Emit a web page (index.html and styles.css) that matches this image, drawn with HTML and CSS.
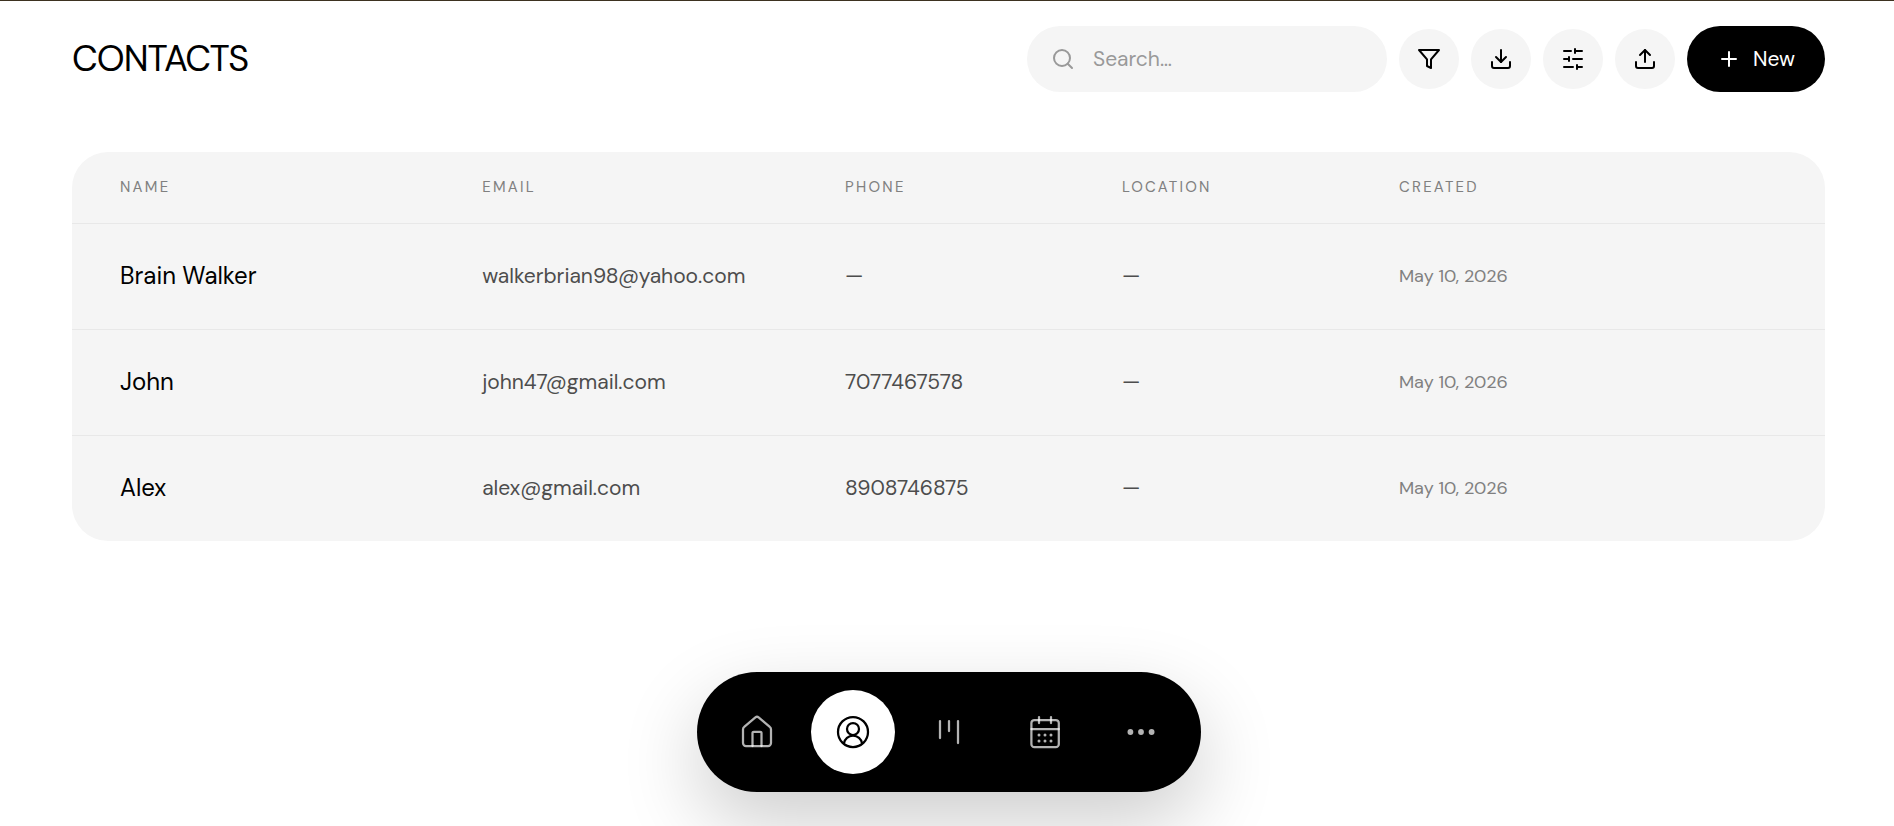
FILE: index.html
```html
<!DOCTYPE html>
<html lang="en">
<head>
    <meta charset="UTF-8">
    <meta name="viewport" content="width=device-width, initial-scale=1.0">
    <title>Contacts</title>
    <link rel="stylesheet" href="styles.css">
</head>
<body>
    <header class="page-header">
        <h1>CONTACTS</h1>

        <div class="toolbar">
            <div class="search">
                <svg class="icon" viewBox="0 0 24 24"><circle cx="11" cy="11" r="8"/><path d="m21 21-4.3-4.3"/></svg>
                <input type="text" aria-label="Search contacts" placeholder="Search…">
            </div>
            <button class="icon-btn" type="button" aria-label="Filter">
                <svg class="icon" viewBox="0 0 24 24"><path d="M22 3H2l8 9.46V19l4 2v-8.54L22 3z"/></svg>
            </button>
            <button class="icon-btn" type="button" aria-label="Import">
                <svg class="icon" viewBox="0 0 24 24"><path d="M21 15v4a2 2 0 0 1-2 2H5a2 2 0 0 1-2-2v-4"/><path d="m7 10 5 5 5-5"/><path d="M12 15V3"/></svg>
            </button>
            <button class="icon-btn" type="button" aria-label="Customize fields">
                <svg class="icon" viewBox="0 0 24 24"><path d="M21 4h-7M10 4H3M21 12h-9M8 12H3M21 20h-5M12 20H3M14 2v4M8 10v4M16 18v4"/></svg>
            </button>
            <button class="icon-btn" type="button" aria-label="Export">
                <svg class="icon" viewBox="0 0 24 24"><path d="M21 15v4a2 2 0 0 1-2 2H5a2 2 0 0 1-2-2v-4"/><path d="m17 8-5-5-5 5"/><path d="M12 3v12"/></svg>
            </button>
            <button class="new-btn" type="button">
                <svg class="icon" viewBox="0 0 24 24"><path d="M5 12h14M12 5v14"/></svg>
                New
            </button>
        </div>
    </header>

    <main class="card">
        <table class="contacts">
            <thead>
                <tr>
                    <th class="col-name">Name</th>
                    <th class="col-email">Email</th>
                    <th class="col-info">Phone</th>
                    <th class="col-info">Location</th>
                    <th>Created</th>
                </tr>
            </thead>
            <tbody>
                <tr>
                    <td class="name">Brain Walker</td>
                    <td>walkerbrian98@yahoo.com</td>
                    <td>—</td>
                    <td>—</td>
                    <td class="created">May 10, 2026</td>
                </tr>
                <tr>
                    <td class="name">John</td>
                    <td>john47@gmail.com</td>
                    <td>7077467578</td>
                    <td>—</td>
                    <td class="created">May 10, 2026</td>
                </tr>
                <tr>
                    <td class="name">Alex</td>
                    <td>alex@gmail.com</td>
                    <td>8908746875</td>
                    <td>—</td>
                    <td class="created">May 10, 2026</td>
                </tr>
            </tbody>
        </table>
    </main>

    <nav class="dock" aria-label="Main">
        <a href="#home" aria-label="Home">
            <svg class="icon" viewBox="0 0 36 36"><path d="M4 15.4c0-1 .4-1.9 1.2-2.5L16.4 3.4a2.6 2.6 0 0 1 3.2 0l11.2 9.5c.8.6 1.2 1.5 1.2 2.5V29a3 3 0 0 1-3 3H7a3 3 0 0 1-3-3V15.4z"/><path d="M13.5 32V19a1.2 1.2 0 0 1 1.2-1.2h6.6a1.2 1.2 0 0 1 1.2 1.2v13"/></svg>
        </a>
        <a href="#contacts" class="active" aria-label="Contacts" aria-current="page">
            <svg class="icon" viewBox="0 0 36 36"><circle cx="18" cy="18" r="15"/><circle cx="18" cy="15" r="6"/><path d="M8.9 29.5a9.2 9.2 0 0 1 18.2 0"/></svg>
        </a>
        <a href="#pipeline" aria-label="Pipeline">
            <svg class="icon" viewBox="0 0 36 36"><path d="M9 7v17"/><path d="M18 7v10"/><path d="M27 7v22"/></svg>
        </a>
        <a href="#calendar" aria-label="Calendar">
            <svg class="icon" viewBox="0 0 36 36"><rect x="4.4" y="6" width="27.4" height="27.2" rx="3"/><path d="M4.4 15h27.4"/><path d="M12 3v6"/><path d="M24 3v6"/><g class="dots"><circle cx="12" cy="21" r="1.5"/><circle cx="18" cy="21" r="1.5"/><circle cx="24" cy="21" r="1.5"/><circle cx="12" cy="27" r="1.5"/><circle cx="18" cy="27" r="1.5"/><circle cx="24" cy="27" r="1.5"/></g></svg>
        </a>
        <button type="button" aria-label="More">
            <svg class="icon" viewBox="0 0 36 36"><g class="dots"><circle cx="7.4" cy="18" r="2.9"/><circle cx="18" cy="18" r="2.9"/><circle cx="28.6" cy="18" r="2.9"/></g></svg>
        </button>
    </nav>
</body>
</html>
```

FILE: styles.css
```css
* {
    box-sizing: border-box;
}
body {
    margin: 0;
    padding: 25px 69px 0 72px;
    border-top: 1px solid #3d3220;
    font-family: "DM Sans", Inter, sans-serif;
    font-weight: 400;
    color: #000;
    background: #fff;
}
button, input {
    font: inherit;
    border: none;
}
button {
    cursor: pointer;
}
.icon {
    width: 24px;
    height: 24px;
    flex: none;
    fill: none;
    stroke: currentColor;
    stroke-width: 2;
    stroke-linecap: round;
    stroke-linejoin: round;
}

/* Header */
.page-header {
    display: flex;
    align-items: center;
    justify-content: space-between;
    margin-bottom: 60px;
}
h1 {
    margin: 0;
    padding-bottom: 2px;
    font-size: 36px;
    font-weight: 400;
    letter-spacing: -1px;
}
.toolbar {
    display: flex;
    align-items: center;
    gap: 12px;
}
.search {
    display: flex;
    align-items: center;
    gap: 18px;
    width: 360px;
    height: 66px;
    padding: 0 24px;
    border-radius: 33px;
    background: #f5f5f5;
    color: #999;
}
.search input {
    flex: 1;
    min-width: 0;
    padding: 0;
    font-size: 21px;
    color: #000;
    background: none;
    outline: none;
}
.search input::placeholder {
    color: #999;
}
.icon-btn {
    display: flex;
    align-items: center;
    justify-content: center;
    width: 60px;
    height: 60px;
    padding: 0;
    border-radius: 50%;
    background: #f5f5f5;
    color: #000;
}
.new-btn {
    display: flex;
    align-items: center;
    gap: 12px;
    height: 66px;
    padding: 0 30px;
    border-radius: 33px;
    background: #000;
    color: #fff;
    font-size: 21px;
}

/* Contacts table */
.card {
    border-radius: 36px;
    background: #f5f5f5;
    overflow: hidden;
}
.contacts {
    width: 100%;
    table-layout: fixed;
    border-collapse: separate;
    border-spacing: 0;
}
.contacts th,
.contacts td {
    padding: 0 0 2px;
    text-align: left;
    border-bottom: 1px solid #e8e8e8;
}
.contacts th:first-child,
.contacts td:first-child {
    padding-left: 48px;
}
.contacts th {
    height: 72px;
    font-size: 15px;
    font-weight: 400;
    letter-spacing: 0.15em;
    text-transform: uppercase;
    color: #808080;
}
.contacts td {
    height: 106px;
    font-size: 21px;
    color: #4d4d4d;
}
.contacts tr:last-child td {
    height: 105px;
    border-bottom: none;
}
.contacts .name {
    font-size: 24px;
    color: #000;
}
.contacts .created {
    font-size: 18px;
    color: #808080;
}
.col-name {
    width: 23.4%;
}
.col-email {
    width: 20.7%;
}
.col-info {
    width: 15.8%;
}

/* Bottom dock */
.dock {
    position: fixed;
    left: 72px;
    right: 69px;
    bottom: 34px;
    display: flex;
    gap: 12px;
    width: max-content;
    margin: 0 auto;
    padding: 18px;
    border-radius: 60px;
    background: #000;
    box-shadow: 0 30px 80px rgba(0, 0, 0, 0.2);
}
.dock a,
.dock button {
    display: flex;
    align-items: center;
    justify-content: center;
    width: 84px;
    height: 84px;
    padding: 0;
    border-radius: 50%;
    background: none;
    color: rgba(255, 255, 255, 0.7);
}
.dock .active {
    background: #fff;
    color: #000;
}
.dock .icon {
    width: 36px;
    height: 36px;
    stroke-width: 2.25;
}
.dock .dots {
    fill: currentColor;
    stroke: none;
}
```
